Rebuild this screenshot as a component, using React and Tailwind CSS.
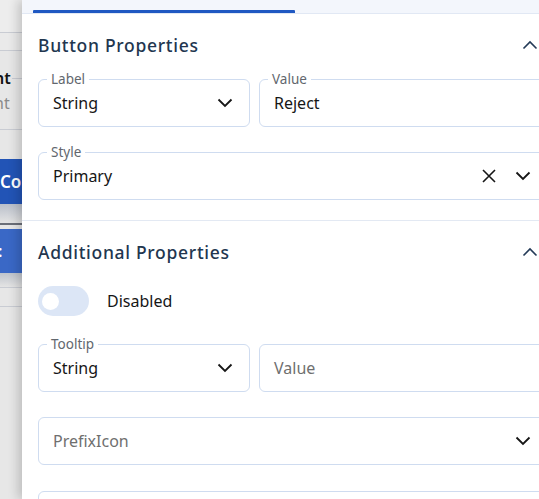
import React from 'react';

const font = { fontFamily: '"Noto Sans", "Open Sans", sans-serif' };

const ChevronDown = () => (
  <svg width="16" height="10" viewBox="0 0 16 10" fill="none" className="shrink-0">
    <polyline points="1.5,1.5 8,8 14.5,1.5" stroke="#161616" strokeWidth="1.8" />
  </svg>
);

const ChevronUp = () => (
  <svg width="16" height="10" viewBox="0 0 16 10" fill="none" className="shrink-0">
    <polyline points="1.5,8.5 8,2 14.5,8.5" stroke="#233a57" strokeWidth="1.6" />
  </svg>
);

const Close = () => (
  <svg width="14" height="14" viewBox="0 0 14 14" fill="none" className="shrink-0">
    <path d="M1 1 L13 13 M13 1 L1 13" stroke="#161616" strokeWidth="1.6" />
  </svg>
);

const Field = ({ label, children, className = '' }) => (
  <div className={`relative h-[48px] rounded-[6px] border border-[#cfdcf0] px-[14px] flex items-center ${className}`}>
    {label && (
      <span className="absolute -top-[10px] left-[8px] bg-white px-[4px] text-[13.5px] leading-[18px] text-[#62676e]">
        {label}
      </span>
    )}
    {children}
  </div>
);

const SectionHeader = ({ title }) => (
  <div className="flex items-center justify-between h-[24px] pr-[10px]">
    <span className="text-[17.5px] tracking-[0.7px] font-medium text-[#22364f]">{title}</span>
    <ChevronUp />
  </div>
);

const BackStrip = () => (
  <div className="w-[22px] shrink-0 h-full bg-[#e7e7e7] overflow-hidden text-[16px] whitespace-nowrap">
    <div className="h-[32px] bg-[#ededed]" />
    <div className="h-px bg-[#c9ccd3]" />
    <div className="h-[17px] bg-[#eaeaea]" />
    <div className="h-px bg-[#c9ccd3]" />
    <div className="h-[18px]" />
    <div className="flex items-center h-[18px]">
      <span className="font-semibold text-[#111] -ml-[6px] leading-none">nt</span>
      <span className="flex-1 h-px bg-[#c9ccd3] ml-[1px]" />
    </div>
    <div className="h-[6px]" />
    <div className="text-[#8a8a8a] -ml-[6px] leading-[20px]">nt</div>
    <div className="h-[16px]" />
    <div className="h-px bg-[#c9ccd3]" />
    <div className="h-[29px]" />
    <div className="h-[45px] bg-[#2254b6] flex items-center text-white font-semibold text-[17px] -ml-[6px]">
      <span className="pl-[6px]">Con</span>
    </div>
    <div className="h-[19px] bg-gradient-to-b from-[#b9bfca] to-[#e4e4e4]" />
    <div className="h-[2px] bg-[#6b6f78]" />
    <div className="h-[4px]" />
    <div className="h-[44px] bg-[#3a68c6] flex items-center text-white font-semibold">
      <span className="-ml-[2px]">:</span>
    </div>
    <div className="h-[14px] bg-gradient-to-b from-[#bfc4cc] to-[#e4e4e4]" />
    <div className="h-px bg-[#c9ccd3]" />
    <div className="h-[18px]" />
    <div className="h-px bg-[#c9ccd3]" />
  </div>
);

export default function App() {
  return (
    <div className="flex w-[539px] h-[499px] overflow-hidden bg-white" style={font}>
      <BackStrip />
      <div className="w-[542px] shrink-0 h-full bg-white shadow-[-4px_0_10px_rgba(0,0,0,0.18)] relative">
        <div className="h-[13px] bg-[#f3f6fc] flex items-end pl-[11px]">
          <div className="w-[262px] h-[3px] bg-[#1f58c2] rounded-t-[1px]" />
        </div>
        <div className="h-px bg-[#e1e8f4]" />

        <div className="px-[16px] pt-[19px] pb-[20px]">
          <SectionHeader title="Button Properties" />
          <div className="grid grid-cols-[212px_1fr] gap-[9px] mt-[22px]">
            <Field label="Label" className="justify-between pr-[16px]">
              <span className="text-[16px] text-[#161616]">String</span>
              <ChevronDown />
            </Field>
            <Field label="Value">
              <span className="text-[16px] text-[#161616]">Reject</span>
            </Field>
          </div>
          <Field label="Style" className="mt-[25px] pr-[16px]">
            <span className="text-[16px] text-[#161616] flex-1">Primary</span>
            <Close />
            <span className="w-[19px]" />
            <ChevronDown />
          </Field>
        </div>

        <div className="h-px bg-[#e3e9f3]" />

        <div className="px-[16px] pt-[19px]">
          <SectionHeader title="Additional Properties" />
          <div className="flex items-center mt-[22px] h-[30px]">
            <div className="w-[51px] h-[30px] rounded-full bg-[#dce6f6] flex items-center pl-[4px]">
              <div className="w-[17px] h-[17px] rounded-full bg-white" />
            </div>
            <span className="ml-[18px] text-[16px] text-[#161616]">Disabled</span>
          </div>
          <div className="grid grid-cols-[212px_1fr] gap-[9px] mt-[28px]">
            <Field label="Tooltip" className="justify-between pr-[16px]">
              <span className="text-[16px] text-[#161616]">String</span>
              <ChevronDown />
            </Field>
            <Field>
              <span className="text-[16px] text-[#6f6f6f]">Value</span>
            </Field>
          </div>
          <Field className="mt-[25px] justify-between pr-[16px]">
            <span className="text-[16px] text-[#6f6f6f]">PrefixIcon</span>
            <ChevronDown />
          </Field>
          <Field className="mt-[26px]" />
        </div>
      </div>
    </div>
  );
}
